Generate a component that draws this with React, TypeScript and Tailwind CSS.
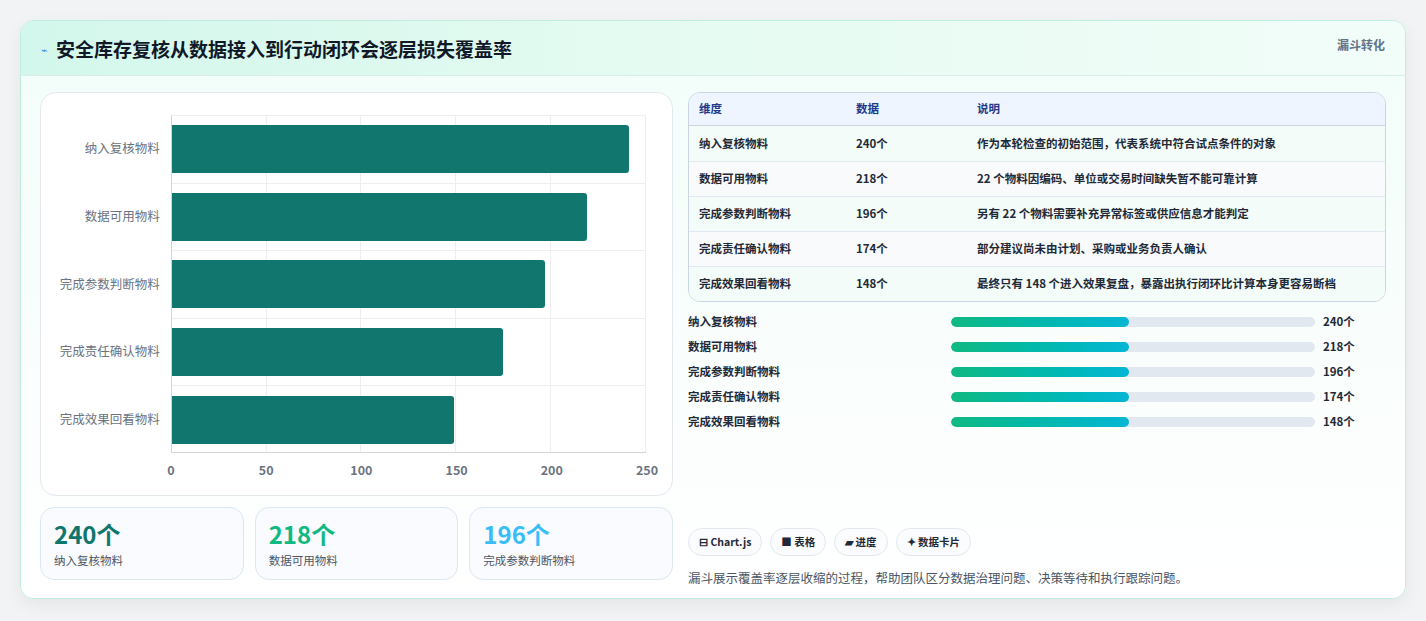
import React from "react";

const rows = [
  { name: "纳入复核物料", value: 240, note: "作为本轮检查的初始范围，代表系统中符合试点条件的对象" },
  { name: "数据可用物料", value: 218, note: "22 个物料因编码、单位或交易时间缺失暂不能可靠计算" },
  { name: "完成参数判断物料", value: 196, note: "另有 22 个物料需要补充异常标签或供应信息才能判定" },
  { name: "完成责任确认物料", value: 174, note: "部分建议尚未由计划、采购或业务负责人确认" },
  { name: "完成效果回看物料", value: 148, note: "最终只有 148 个进入效果复盘，暴露出执行闭环比计算本身更容易断档" },
];

const font = { fontFamily: '"Noto Sans CJK SC", "Noto Sans", sans-serif' };

const App: React.FC = () => {
  return (
    <div className="w-[1426px] h-[621px] bg-[#f1f3f4] pt-[20px] pl-[20px]" style={font}>
      <div className="w-[1386px] h-[579px] rounded-[14px] border border-[#bfeee0] bg-white overflow-hidden shadow-[0_6px_18px_rgba(0,0,0,0.06)]">
        {/* header */}
        <div className="h-[55px] border-b border-[#d7efe8] bg-gradient-to-r from-[#d3f7ec] via-[#e6fbf1] to-[#f2fdf9] flex items-start justify-between px-[20px]">
          <div className="flex items-center gap-[8px] mt-[14px]">
            <span className="text-[11px] text-[#3b82f6]">⌁</span>
            <h1 className="text-[19px] font-bold text-[#111827] leading-[28px]">安全库存复核从数据接入到行动闭环会逐层损失覆盖率</h1>
          </div>
          <span className="mt-[15px] text-[12px] font-bold text-[#64748b]">漏斗转化</span>
        </div>

        <div className="flex gap-[15px] px-[19px] pt-[16px] bg-gradient-to-b from-[#f3fdf9] to-white h-[523px]">
          {/* left */}
          <div className="w-[633px] flex flex-col gap-[11px]">
            <div className="h-[404px] rounded-[16px] border border-[#e3e8ef] bg-white pt-[22px] pl-[12px] pr-[26px]">
              <div className="flex">
                <div className="w-[118px] flex flex-col">
                  {rows.map((r) => (
                    <div key={r.name} className="h-[67.6px] flex items-center justify-end pr-[11px] text-[12.5px] text-[#6b7280]">{r.name}</div>
                  ))}
                </div>
                <div className="relative w-[476px] h-[338px] border-l border-b border-[#d1d5db] border-t-[#e5e7eb]">
                  <div className="absolute inset-0 grid grid-cols-5">
                    {[0, 1, 2, 3, 4].map((i) => (
                      <div key={i} className="border-r border-[#eceef2] border-t" />
                    ))}
                  </div>
                  <div className="relative flex flex-col">
                    {rows.map((r, i) => (
                      <div key={r.name} className={`h-[67.6px] flex items-center ${i ? "border-t border-[#eceef2]" : ""}`}>
                        <div className="h-[48px] bg-[#11766d] rounded-r-[3px]" style={{ width: r.value * 1.904 }} />
                      </div>
                    ))}
                  </div>
                </div>
              </div>
              <div className="ml-[118px] w-[476px] flex justify-between mt-[8px] text-[12.5px] font-semibold text-[#6b7280]">
                {[0, 50, 100, 150, 200, 250].map((t) => (
                  <span key={t} className="w-0 flex justify-center">{t}</span>
                ))}
              </div>
            </div>
            <div className="grid grid-cols-3 gap-[11px]">
              {[
                { v: "240个", l: "纳入复核物料", c: "text-[#0f766e]" },
                { v: "218个", l: "数据可用物料", c: "text-[#10b981]" },
                { v: "196个", l: "完成参数判断物料", c: "text-[#38bdf8]" },
              ].map((s) => (
                <div key={s.l} className="h-[73px] rounded-[14px] border border-[#dbe7f3] bg-[#f9fbfe] px-[13px] pt-[10px]">
                  <div className={`text-[24px] font-bold leading-[32px] ${s.c}`}>{s.v}</div>
                  <div className="text-[11.5px] text-[#4b5563] mt-[2px]">{s.l}</div>
                </div>
              ))}
            </div>
          </div>

          {/* right */}
          <div className="w-[700px] flex flex-col">
            <div className="rounded-[12px] border border-[#cbd5e1] overflow-hidden">
              <div className="flex h-[33px] items-center bg-[#eef5ff] border-b border-[#cbd5e1] text-[11.5px] font-bold text-[#1e3a8a]">
                <div className="w-[167px] pl-[10px]">维度</div>
                <div className="w-[121px]">数据</div>
                <div>说明</div>
              </div>
              {rows.map((r, i) => (
                <div key={r.name} className={`flex h-[35px] items-center text-[11.5px] font-semibold text-[#1f2937] ${i ? "border-t border-[#e2e8f0]" : ""} ${i % 2 ? "bg-[#f8fafc]" : "bg-[#f3fcf8]"}`}>
                  <div className="w-[167px] pl-[10px]">{r.name}</div>
                  <div className="w-[121px]">{r.value}个</div>
                  <div>{r.note}</div>
                </div>
              ))}
            </div>
            <div className="flex flex-col gap-[7px] mt-[11px]">
              {rows.map((r) => (
                <div key={r.name} className="flex items-center h-[18px] text-[11.5px] font-semibold text-[#1f2937]">
                  <div className="w-[263px]">{r.name}</div>
                  <div className="w-[364px] h-[10px] rounded-full bg-[#e2e8f0] overflow-hidden">
                    <div className="h-full w-[178px] rounded-full bg-gradient-to-r from-[#10b981] to-[#06b6d4]" />
                  </div>
                  <div className="ml-[8px]">{r.value}个</div>
                </div>
              ))}
            </div>
            <div className="flex gap-[8px] mt-[97px]">
              {["⊟ Chart.js", "■ 表格", "▰ 进度", "✦ 数据卡片"].map((c) => (
                <span key={c} className="h-[28px] px-[10px] rounded-full border border-[#e2e8f0] bg-[#fbfcfd] text-[10.5px] font-semibold text-[#1f2937] flex items-center">{c}</span>
              ))}
            </div>
            <p className="mt-[13px] text-[12.5px] text-[#4b5563]">漏斗展示覆盖率逐层收缩的过程，帮助团队区分数据治理问题、决策等待和执行跟踪问题。</p>
          </div>
        </div>
      </div>
    </div>
  );
};

export default App;
